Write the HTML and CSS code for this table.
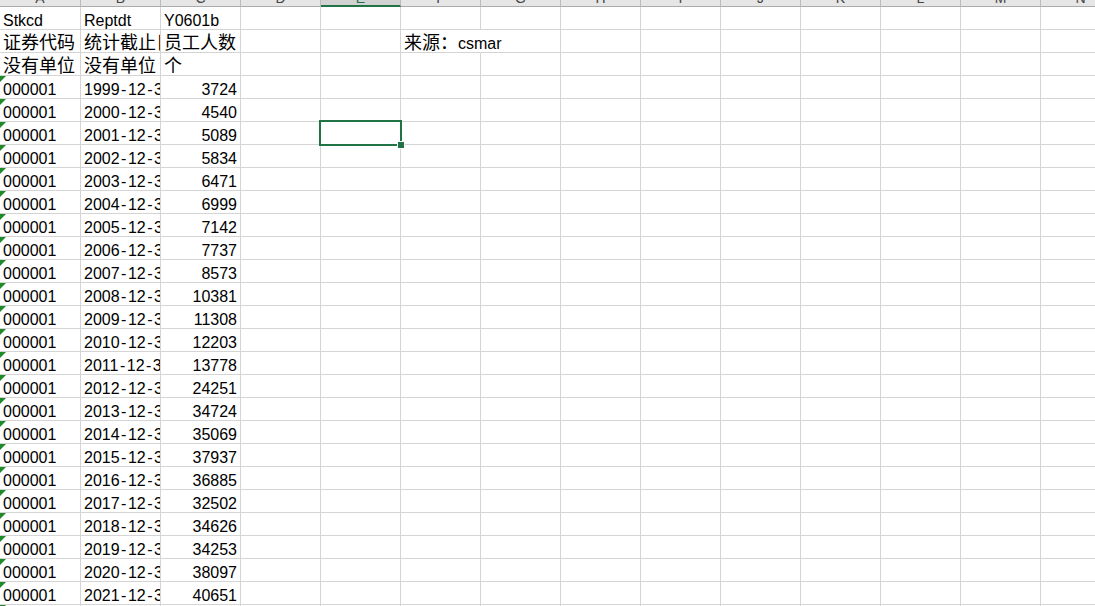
FILE: index.html
```html
<!DOCTYPE html>
<html lang="zh-CN">
<head>
<meta charset="utf-8">
<title>Sheet1</title>
<link rel="stylesheet" href="styles.css">
</head>
<body>
<div class="sheet">
  <div class="row hdr">
    <div class="h"><span>A</span></div><div class="h"><span>B</span></div><div class="h"><span>C</span></div><div class="h"><span>D</span></div><div class="h on"><span>E</span></div><div class="h"><span>F</span></div><div class="h"><span>G</span></div><div class="h"><span>H</span></div><div class="h"><span>I</span></div><div class="h"><span>J</span></div><div class="h"><span>K</span></div><div class="h"><span>L</span></div><div class="h"><span>M</span></div><div class="h"><span>N</span></div>
  </div>
  <div class="row"><div class="c">Stkcd</div><div class="c">Reptdt</div><div class="c">Y0601b</div><div class="c"></div><div class="c"></div><div class="c"></div><div class="c"></div><div class="c"></div><div class="c"></div><div class="c"></div><div class="c"></div><div class="c"></div><div class="c"></div><div class="c"></div></div>
  <div class="row"><div class="c"><span class="zh">证券代码</span></div><div class="c"><span class="zh">统计截止日期</span></div><div class="c"><span class="zh">员工人数</span></div><div class="c"></div><div class="c"></div><div class="c spill"><span class="zh">来源：</span>csmar</div><div class="c"></div><div class="c"></div><div class="c"></div><div class="c"></div><div class="c"></div><div class="c"></div><div class="c"></div><div class="c"></div></div>
  <div class="row"><div class="c"><span class="zh">没有单位</span></div><div class="c"><span class="zh">没有单位</span></div><div class="c"><span class="zh">个</span></div><div class="c"></div><div class="c"></div><div class="c"></div><div class="c"></div><div class="c"></div><div class="c"></div><div class="c"></div><div class="c"></div><div class="c"></div><div class="c"></div><div class="c"></div></div>
  <div class="row"><div class="c a">000001</div><div class="c">1999<span class="d">-</span>12<span class="d">-</span>31</div><div class="c n">3724</div><div class="c"></div><div class="c"></div><div class="c"></div><div class="c"></div><div class="c"></div><div class="c"></div><div class="c"></div><div class="c"></div><div class="c"></div><div class="c"></div><div class="c"></div></div>
  <div class="row"><div class="c a">000001</div><div class="c">2000<span class="d">-</span>12<span class="d">-</span>31</div><div class="c n">4540</div><div class="c"></div><div class="c"></div><div class="c"></div><div class="c"></div><div class="c"></div><div class="c"></div><div class="c"></div><div class="c"></div><div class="c"></div><div class="c"></div><div class="c"></div></div>
  <div class="row"><div class="c a">000001</div><div class="c">2001<span class="d">-</span>12<span class="d">-</span>31</div><div class="c n">5089</div><div class="c"></div><div class="c"></div><div class="c"></div><div class="c"></div><div class="c"></div><div class="c"></div><div class="c"></div><div class="c"></div><div class="c"></div><div class="c"></div><div class="c"></div></div>
  <div class="row"><div class="c a">000001</div><div class="c">2002<span class="d">-</span>12<span class="d">-</span>31</div><div class="c n">5834</div><div class="c"></div><div class="c"></div><div class="c"></div><div class="c"></div><div class="c"></div><div class="c"></div><div class="c"></div><div class="c"></div><div class="c"></div><div class="c"></div><div class="c"></div></div>
  <div class="row"><div class="c a">000001</div><div class="c">2003<span class="d">-</span>12<span class="d">-</span>31</div><div class="c n">6471</div><div class="c"></div><div class="c"></div><div class="c"></div><div class="c"></div><div class="c"></div><div class="c"></div><div class="c"></div><div class="c"></div><div class="c"></div><div class="c"></div><div class="c"></div></div>
  <div class="row"><div class="c a">000001</div><div class="c">2004<span class="d">-</span>12<span class="d">-</span>31</div><div class="c n">6999</div><div class="c"></div><div class="c"></div><div class="c"></div><div class="c"></div><div class="c"></div><div class="c"></div><div class="c"></div><div class="c"></div><div class="c"></div><div class="c"></div><div class="c"></div></div>
  <div class="row"><div class="c a">000001</div><div class="c">2005<span class="d">-</span>12<span class="d">-</span>31</div><div class="c n">7142</div><div class="c"></div><div class="c"></div><div class="c"></div><div class="c"></div><div class="c"></div><div class="c"></div><div class="c"></div><div class="c"></div><div class="c"></div><div class="c"></div><div class="c"></div></div>
  <div class="row"><div class="c a">000001</div><div class="c">2006<span class="d">-</span>12<span class="d">-</span>31</div><div class="c n">7737</div><div class="c"></div><div class="c"></div><div class="c"></div><div class="c"></div><div class="c"></div><div class="c"></div><div class="c"></div><div class="c"></div><div class="c"></div><div class="c"></div><div class="c"></div></div>
  <div class="row"><div class="c a">000001</div><div class="c">2007<span class="d">-</span>12<span class="d">-</span>31</div><div class="c n">8573</div><div class="c"></div><div class="c"></div><div class="c"></div><div class="c"></div><div class="c"></div><div class="c"></div><div class="c"></div><div class="c"></div><div class="c"></div><div class="c"></div><div class="c"></div></div>
  <div class="row"><div class="c a">000001</div><div class="c">2008<span class="d">-</span>12<span class="d">-</span>31</div><div class="c n">10381</div><div class="c"></div><div class="c"></div><div class="c"></div><div class="c"></div><div class="c"></div><div class="c"></div><div class="c"></div><div class="c"></div><div class="c"></div><div class="c"></div><div class="c"></div></div>
  <div class="row"><div class="c a">000001</div><div class="c">2009<span class="d">-</span>12<span class="d">-</span>31</div><div class="c n">11308</div><div class="c"></div><div class="c"></div><div class="c"></div><div class="c"></div><div class="c"></div><div class="c"></div><div class="c"></div><div class="c"></div><div class="c"></div><div class="c"></div><div class="c"></div></div>
  <div class="row"><div class="c a">000001</div><div class="c">2010<span class="d">-</span>12<span class="d">-</span>31</div><div class="c n">12203</div><div class="c"></div><div class="c"></div><div class="c"></div><div class="c"></div><div class="c"></div><div class="c"></div><div class="c"></div><div class="c"></div><div class="c"></div><div class="c"></div><div class="c"></div></div>
  <div class="row"><div class="c a">000001</div><div class="c">2011<span class="d">-</span>12<span class="d">-</span>31</div><div class="c n">13778</div><div class="c"></div><div class="c"></div><div class="c"></div><div class="c"></div><div class="c"></div><div class="c"></div><div class="c"></div><div class="c"></div><div class="c"></div><div class="c"></div><div class="c"></div></div>
  <div class="row"><div class="c a">000001</div><div class="c">2012<span class="d">-</span>12<span class="d">-</span>31</div><div class="c n">24251</div><div class="c"></div><div class="c"></div><div class="c"></div><div class="c"></div><div class="c"></div><div class="c"></div><div class="c"></div><div class="c"></div><div class="c"></div><div class="c"></div><div class="c"></div></div>
  <div class="row"><div class="c a">000001</div><div class="c">2013<span class="d">-</span>12<span class="d">-</span>31</div><div class="c n">34724</div><div class="c"></div><div class="c"></div><div class="c"></div><div class="c"></div><div class="c"></div><div class="c"></div><div class="c"></div><div class="c"></div><div class="c"></div><div class="c"></div><div class="c"></div></div>
  <div class="row"><div class="c a">000001</div><div class="c">2014<span class="d">-</span>12<span class="d">-</span>31</div><div class="c n">35069</div><div class="c"></div><div class="c"></div><div class="c"></div><div class="c"></div><div class="c"></div><div class="c"></div><div class="c"></div><div class="c"></div><div class="c"></div><div class="c"></div><div class="c"></div></div>
  <div class="row"><div class="c a">000001</div><div class="c">2015<span class="d">-</span>12<span class="d">-</span>31</div><div class="c n">37937</div><div class="c"></div><div class="c"></div><div class="c"></div><div class="c"></div><div class="c"></div><div class="c"></div><div class="c"></div><div class="c"></div><div class="c"></div><div class="c"></div><div class="c"></div></div>
  <div class="row"><div class="c a">000001</div><div class="c">2016<span class="d">-</span>12<span class="d">-</span>31</div><div class="c n">36885</div><div class="c"></div><div class="c"></div><div class="c"></div><div class="c"></div><div class="c"></div><div class="c"></div><div class="c"></div><div class="c"></div><div class="c"></div><div class="c"></div><div class="c"></div></div>
  <div class="row"><div class="c a">000001</div><div class="c">2017<span class="d">-</span>12<span class="d">-</span>31</div><div class="c n">32502</div><div class="c"></div><div class="c"></div><div class="c"></div><div class="c"></div><div class="c"></div><div class="c"></div><div class="c"></div><div class="c"></div><div class="c"></div><div class="c"></div><div class="c"></div></div>
  <div class="row"><div class="c a">000001</div><div class="c">2018<span class="d">-</span>12<span class="d">-</span>31</div><div class="c n">34626</div><div class="c"></div><div class="c"></div><div class="c"></div><div class="c"></div><div class="c"></div><div class="c"></div><div class="c"></div><div class="c"></div><div class="c"></div><div class="c"></div><div class="c"></div></div>
  <div class="row"><div class="c a">000001</div><div class="c">2019<span class="d">-</span>12<span class="d">-</span>31</div><div class="c n">34253</div><div class="c"></div><div class="c"></div><div class="c"></div><div class="c"></div><div class="c"></div><div class="c"></div><div class="c"></div><div class="c"></div><div class="c"></div><div class="c"></div><div class="c"></div></div>
  <div class="row"><div class="c a">000001</div><div class="c">2020<span class="d">-</span>12<span class="d">-</span>31</div><div class="c n">38097</div><div class="c"></div><div class="c"></div><div class="c"></div><div class="c"></div><div class="c"></div><div class="c"></div><div class="c"></div><div class="c"></div><div class="c"></div><div class="c"></div><div class="c"></div></div>
  <div class="row"><div class="c a">000001</div><div class="c">2021<span class="d">-</span>12<span class="d">-</span>31</div><div class="c n">40651</div><div class="c"></div><div class="c"></div><div class="c"></div><div class="c"></div><div class="c"></div><div class="c"></div><div class="c"></div><div class="c"></div><div class="c"></div><div class="c"></div><div class="c"></div></div>
  <div class="row"><div class="c a">000001</div><div class="c">2022<span class="d">-</span>12<span class="d">-</span>31</div><div class="c n">44262</div><div class="c"></div><div class="c"></div><div class="c"></div><div class="c"></div><div class="c"></div><div class="c"></div><div class="c"></div><div class="c"></div><div class="c"></div><div class="c"></div><div class="c"></div></div>
  <div class="sel"></div>
</div>
</body>
</html>
```

FILE: styles.css
```css
* { box-sizing: border-box; }

html, body {
  margin: 0;
  height: 606px;
  overflow: hidden;
  background: #fff;
}

body {
  font: 16px "Liberation Sans", "Noto Sans CJK SC", sans-serif;
  color: #000;
}

.sheet {
  position: relative;
}

.row {
  display: grid;
  grid-template-columns: 81px repeat(13, 80px);
  height: 23px;
}

.c {
  border-right: 1px solid #d4d4d4;
  border-bottom: 1px solid #d4d4d4;
  padding: 5px 3px 0;
  line-height: 17px;
  white-space: nowrap;
  overflow: hidden;
}

.n { text-align: right; }

.zh {
  font-family: "Noto Sans CJK SC", sans-serif;
  font-size: 18px;
  line-height: 12px;
}

.d { margin: 0 1.5px; }

.a { position: relative; }
.a::before {
  content: "";
  position: absolute;
  left: 0;
  top: 0;
  border-top: 6px solid #1f8a2a;
  border-right: 6px solid transparent;
}

.spill {
  overflow: visible;
  border-right-color: transparent;
}

/* column header strip (mostly scrolled off the top) */
.hdr { height: 7px; }

.h {
  background: #e6e6e6;
  border-right: 1px solid #bcbcbc;
  border-bottom: 1px solid #ababab;
  text-align: center;
  overflow: hidden;
  font-size: 14px;
  line-height: 14px;
  color: #444;
}

.h span {
  display: block;
  margin-top: -9px;
}

.h.on {
  background: #d2d2d2;
  color: #217346;
  border-bottom: 2px solid #217346;
}

/* active cell E6 */
.sel {
  position: absolute;
  left: 319px;
  top: 120px;
  width: 83px;
  height: 26px;
  border: 2px solid #217346;
}

.sel::after {
  content: "";
  position: absolute;
  left: 76px;
  top: 19px;
  width: 6px;
  height: 6px;
  background: #217346;
  border: 1px solid #fff;
  box-sizing: content-box;
}
```
